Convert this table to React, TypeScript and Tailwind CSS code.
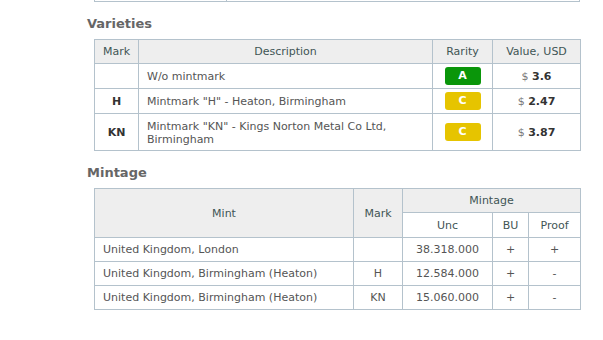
import React from "react";

const B = "border border-[#b4c2cc] pt-[2px] pb-0";

export default function App() {
  const font = { fontFamily: '"DejaVu Sans", Verdana, sans-serif' };
  return (
    <div className="w-[603px] h-[340px] bg-white overflow-hidden" style={font}>
      <div className="ml-[94px] w-[486px] h-[2px] border-l border-r border-b border-[#b4c2cc] flex">
        <div className="w-[132px] h-full border-r border-[#b4c2cc]" />
      </div>
      <div className="pl-[87px]">
        <h2 className="mt-[12px] text-[13px] font-bold text-[#666] leading-[20px]">Varieties</h2>
        <table className="ml-[7px] mt-[5px] w-[486px] table-fixed border-collapse text-[11px] text-[#555]">
          <colgroup>
            <col className="w-[44px]" />
            <col className="w-[294px]" />
            <col className="w-[60px]" />
            <col className="w-[88px]" />
          </colgroup>
          <thead>
            <tr className="h-[24px] bg-[#eeeeee] text-[#3f5555]">
              <th className={`${B} font-normal`}>Mark</th>
              <th className={`${B} font-normal`}>Description</th>
              <th className={`${B} font-normal`}>Rarity</th>
              <th className={`${B} font-normal`}>Value, USD</th>
            </tr>
          </thead>
          <tbody>
            <tr className="h-[25px]">
              <td className={B}></td>
              <td className={`${B} px-[8px]`}>W/o mintmark</td>
              <td className="border border-[#b4c2cc] text-center">
                <span className="inline-flex w-[36px] h-[18px] items-center justify-center rounded-[3px] bg-[#0a960a] text-white font-bold align-middle">A</span>
              </td>
              <td className={`${B} text-center`}>
                <span className="text-[#777]">$ </span>
                <span className="font-bold text-[#333]">3.6</span>
              </td>
            </tr>
            <tr className="h-[25px]">
              <td className={`${B} text-center font-bold text-[#333]`}>H</td>
              <td className={`${B} px-[8px]`}>Mintmark "H" - Heaton, Birmingham</td>
              <td className="border border-[#b4c2cc] text-center">
                <span className="inline-flex w-[36px] h-[18px] items-center justify-center rounded-[3px] bg-[#e6c400] text-white font-bold align-middle">C</span>
              </td>
              <td className={`${B} text-center`}>
                <span className="text-[#777]">$ </span>
                <span className="font-bold text-[#333]">2.47</span>
              </td>
            </tr>
            <tr className="h-[37px]">
              <td className={`${B} text-center font-bold text-[#333]`}>KN</td>
              <td className={`${B} px-[8px] leading-[13px]`}>
                Mintmark "KN" - Kings Norton Metal Co Ltd,
                <br />
                Birmingham
              </td>
              <td className="border border-[#b4c2cc] text-center">
                <span className="inline-flex w-[36px] h-[18px] items-center justify-center rounded-[3px] bg-[#e6c400] text-white font-bold align-middle">C</span>
              </td>
              <td className={`${B} text-center`}>
                <span className="text-[#777]">$ </span>
                <span className="font-bold text-[#333]">3.87</span>
              </td>
            </tr>
          </tbody>
        </table>
        <h2 className="mt-[12px] text-[13px] font-bold text-[#666] leading-[20px]">Mintage</h2>
        <table className="ml-[7px] mt-[5px] w-[486px] table-fixed border-collapse text-[11px] text-[#555]">
          <colgroup>
            <col className="w-[259px]" />
            <col className="w-[49px]" />
            <col className="w-[90px]" />
            <col className="w-[36px]" />
            <col className="w-[52px]" />
          </colgroup>
          <thead>
            <tr className="h-[24px] bg-[#eeeeee] text-[#3f5555]">
              <th rowSpan={2} className={`${B} font-normal`}>Mint</th>
              <th rowSpan={2} className={`${B} font-normal`}>Mark</th>
              <th colSpan={3} className={`${B} font-normal`}>Mintage</th>
            </tr>
            <tr className="h-[25px] text-[#3f5555]">
              <th className={`${B} font-normal bg-white`}>Unc</th>
              <th className={`${B} font-normal bg-white`}>BU</th>
              <th className={`${B} font-normal bg-white`}>Proof</th>
            </tr>
          </thead>
          <tbody>
            {[
              ["United Kingdom, London", "", "38.318.000", "+", "+"],
              ["United Kingdom, Birmingham (Heaton)", "H", "12.584.000", "+", "-"],
              ["United Kingdom, Birmingham (Heaton)", "KN", "15.060.000", "+", "-"],
            ].map((r, i) => (
              <tr key={i} className="h-[24px]">
                <td className={`${B} px-[8px]`}>{r[0]}</td>
                <td className={`${B} text-center`}>{r[1]}</td>
                <td className={`${B} text-center`}>{r[2]}</td>
                <td className={`${B} text-center`}>{r[3]}</td>
                <td className={`${B} text-center`}>{r[4]}</td>
              </tr>
            ))}
          </tbody>
        </table>
      </div>
    </div>
  );
}
